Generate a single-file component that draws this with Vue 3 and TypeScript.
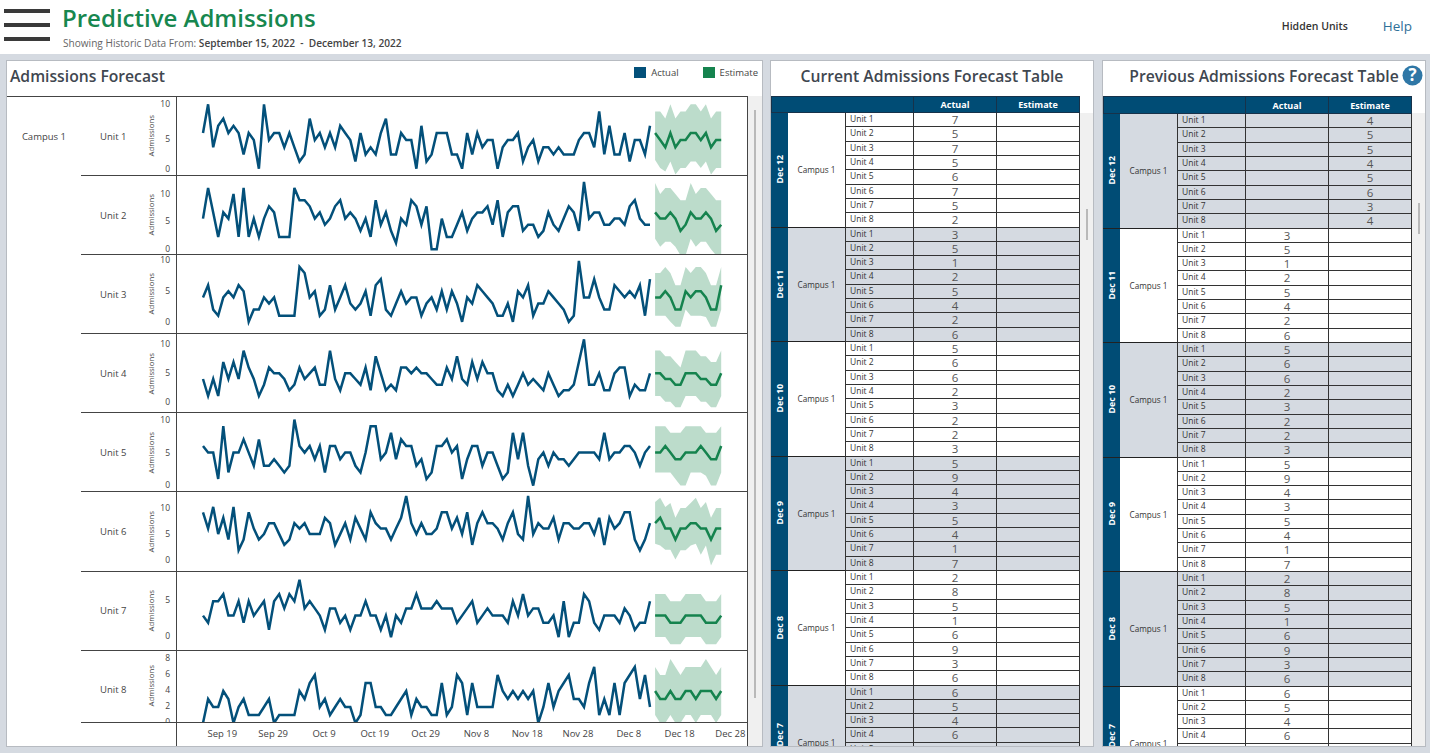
<script setup lang="ts">
interface Unit {
  name: string
  top: number
  y0: number
  step: number
  height: number
  ticks: [string, number][]
  actual: number[]
  est: number[]
  hi: number[]
  lo: number[]
}

const units: Unit[] = [
  { name: 'Unit 1', top: 96, y0: 71.7, step: 7.15, height: 79.1, ticks: [['10', 7], ['5', 42], ['0', 72]],
    actual: [5,9,3,6,7,5,6,5,2,5,4,0,9,4,5,5,3,5,3,1,2,7,4,5,3,5,3,6,5,4,1,5,2,3,2,5,7,2,2,5,4,4,0,6,1,2,5,5,5,2,2,0,5,2,5,3,4,4,0,3,4,4,5,1,3,4,1,3,3,2,3,2,2,2,4,5,5,3,8,2,6,2,2,5,1,4,4,2,6],
    est: [5,4,3,5,3,4,4,5,5,4,5,3,4,4],
    hi: [8,8,7,9,7,8,8,9,9,8,9,7,8,8],
    lo: [1.2,0.1,-0.4,1,-0.8,0.1,0.1,1,1,0.1,1,-0.8,0.1,0.1] },
  { name: 'Unit 2', top: 175, y0: 73.2, step: 6.13, height: 79.1, ticks: [['10', 18], ['5', 45], ['0', 73]],
    actual: [5,10,6,2,6,5,9,2,10,2,5,2,5,7,6,2,2,2,10,8,8,7,5,6,4,5,7,8,5,6,5,3,5,2,8,4,6,3,1,5,4,8,7,4,7,0,0,5,2,2,4,6,3,5,6,6,7,4,8,2,6,7,7,3,4,4,2,3,6,4,3,5,7,6,3,11,5,6,6,4,4,5,5,4,7,8,5,4,4],
    est: [6,5,5,6,5,3,4,6,5,5,6,5,3,4],
    hi: [10.8,9,10,10,9,8,8,10.8,9,10,10,9,8,8],
    lo: [1.7,0.4,1.2,1.2,0.4,-1,-1,1.7,0.4,1.2,1.2,0,-1,-1] },
  { name: 'Unit 3', top: 254, y0: 66.8, step: 6.1, height: 79.1, ticks: [['10', 5], ['5', 36], ['0', 67]],
    actual: [4,6,2,1,4,5,4,6,5,0,2,2,4,3,4,1,1,1,1,9,8,4,5,1,2,6,2,4,6,3,2,3,5,1,6,7,2,1,3,5,3,4,4,1,3,4,2,5,2,5,3,0,4,3,6,5,4,3,1,1,3,0,5,4,6,1,3,3,5,4,3,2,0,1,10,4,4,7,4,2,2,6,5,4,5,4,6,1,7],
    est: [4,4,5,4,2,2,5,4,5,5,4,2,2,6],
    hi: [8,8,9,8,6,6,9,8,9,9,8,6,6,9],
    lo: [1,1,1,0,-0.8,-0.8,2,1,1,1,0.8,-0.8,-0.8,2] },
  { name: 'Unit 4', top: 333, y0: 62, step: 5.67, height: 79.1, ticks: [['10', 10], ['5', 39], ['0', 68]],
    actual: [3,0,3,0,6,3,6,3,8,5,3,0,2,5,4,4,3,1,2,5,3,4,5,2,2,8,3,1,4,4,3,2,5,1,7,4,1,2,1,5,5,4,5,4,4,3,2,2,5,3,7,3,2,6,3,6,4,4,1,0,2,0,2,4,2,3,2,1,4,2,0,1,1,2,6,10,2,2,4,1,1,4,5,5,0,2,1,1,4],
    est: [4,4,3,3,2,2,4,4,4,3,3,2,2,4],
    hi: [8,8,7,7,6,5,8,8,8,7,7,6,6,8],
    lo: [0,0,-1,-1,-2,-2,0,0,0,-1,-1,-2,-2,0] },
  { name: 'Unit 5', top: 412, y0: 72.6, step: 6.6, height: 79.1, ticks: [['10', 7], ['5', 40], ['0', 72]],
    actual: [6,5,5,1,9,2,5,5,7,5,3,7,3,3,4,3,2,3,10,6,5,6,4,6,2,6,6,4,5,5,3,2,5,9,9,4,5,8,4,7,6,6,3,4,1,2,6,6,7,5,6,1,4,6,6,3,5,5,3,1,2,8,4,8,3,0,4,5,3,5,4,4,3,4,5,5,5,5,4,8,4,5,5,6,6,5,3,5,6],
    est: [5,5,6,5,4,4,5,5,5,6,5,4,4,6],
    hi: [9,9,9,8,8,8,9,9,9,9,8,8,8,9],
    lo: [2,2,2,2,1,0,0,2,2,2,1.5,0,0,2] },
  { name: 'Unit 6', top: 491, y0: 69.2, step: 5.43, height: 79.1, ticks: [['10', 16], ['5', 42], ['0', 68]],
    actual: [9,6,10,5,8,4,10,2,4,9,6,4,5,7,7,5,3,4,7,6,7,5,5,5,8,7,3,5,7,4,8,6,4,9,7,6,6,4,6,8,12,7,5,7,5,5,6,9,9,6,8,5,9,3,7,9,7,7,6,4,7,9,5,4,12,5,7,6,6,8,4,7,7,6,6,7,7,5,8,3,8,6,7,9,9,4,2,4,7],
    est: [7,8,6,6,4,6,6,7,7,6,6,4,6,6],
    hi: [10.9,11.7,10,10.7,8,9.8,9.8,10.7,11.7,9.8,10.9,8,9.8,9.8],
    lo: [3.2,2.9,2.1,2.1,0.3,2,2,2.9,3.2,1.2,2.9,-0.8,1.2,1.2] },
  { name: 'Unit 7', top: 570, y0: 65.1, step: 7.17, height: 79.1, ticks: [['5', 28], ['0', 64]],
    actual: [3,2,5,5,6,3,3,5,2,5,3,4,5,1,5,6,4,6,5,8,4,5,4,3,1,4,4,2,3,1,3,3,5,3,3,1,3,0,3,2,4,4,6,4,4,4,5,4,4,4,2,3,4,5,2,3,4,3,3,3,2,5,3,6,3,4,4,2,2,3,0,5,0,2,2,6,5,2,1,3,3,3,2,4,3,1,2,2,5],
    est: [3,3,3,2,2,2,3,3,3,3,2,2,2,3],
    hi: [6,6,6,5,5,5,6,6,6,6,5,5,5,6],
    lo: [0,0,0,-1,-1,-1,0,0,0,0,-1,-1,-1,0] },
  { name: 'Unit 8', top: 650, y0: 72, step: 8, height: 72, ticks: [['8', 7], ['6', 23], ['4', 39], ['2', 55], ['0', 71]],
    actual: [0,3,2,2,4,3,0,2,3,1,1,1,2,3,0,1,1,1,1,4,3,5,6,2,3,1,2,3,2,2,0,1,5,5,2,2,1,1,2,3,4,1,3,2,2,1,1,5,1,2,6,5,1,5,2,2,2,2,6,4,3,4,3,4,3,4,0,2,5,2,4,5,6,3,3,2,5,7,1,3,1,5,1,5,6,7,3,6,2],
    est: [4,3,3,4,3,3,4,4,3,4,4,4,3,4],
    hi: [7,6,6,8,7,6,7,7,7,7,8,7,6,7],
    lo: [1,0,0,1,0,0,1,1,0,1,1,1,0,1] }
]

const xOf = (i: number) => 26 + 5.08 * i
const yOf = (u: Unit, v: number) => u.y0 - v * u.step

function actualPoints(u: Unit): string {
  return u.actual.map((v, i) => `${xOf(i).toFixed(1)},${yOf(u, v).toFixed(1)}`).join(' ')
}
function estPoints(u: Unit): string {
  return u.est.map((v, i) => `${xOf(89 + i).toFixed(1)},${yOf(u, v).toFixed(1)}`).join(' ')
}
function bandPoints(u: Unit): string {
  const top = u.hi.map((v, i) => `${xOf(89 + i).toFixed(1)},${yOf(u, v).toFixed(1)}`)
  const bottom = u.lo.map((v, i) => `${xOf(89 + i).toFixed(1)},${yOf(u, v).toFixed(1)}`).reverse()
  return [...top, ...bottom].join(' ')
}

const dates = ['Sep 19', 'Sep 29', 'Oct 9', 'Oct 19', 'Oct 29', 'Nov 8', 'Nov 18', 'Nov 28', 'Dec 8', 'Dec 18', 'Dec 28']

const actuals: [string, number[]][] = [
  ['Dec 11', [3, 5, 1, 2, 5, 4, 2, 6]],
  ['Dec 10', [5, 6, 6, 2, 3, 2, 2, 3]],
  ['Dec 9', [5, 9, 4, 3, 5, 4, 1, 7]],
  ['Dec 8', [2, 8, 5, 1, 6, 9, 3, 6]],
  ['Dec 7', [6, 5, 4, 6, 5, 4, 5, 6]]
]

interface Group { date: string; actual: (number | null)[]; estimate: (number | null)[] }
const blank = new Array<null>(8).fill(null)

const current: Group[] = [
  { date: 'Dec 12', actual: [7, 5, 7, 5, 6, 7, 5, 2], estimate: blank },
  ...actuals.map(([date, actual]) => ({ date, actual, estimate: blank }))
]
const previous: Group[] = [
  { date: 'Dec 12', actual: blank, estimate: [4, 5, 5, 4, 5, 6, 3, 4] },
  ...actuals.map(([date, actual]) => ({ date, actual, estimate: blank }))
]

const tables = [
  { key: 'current', title: 'Current Admissions Forecast Table', groups: current, greyFirst: false, help: false, thumbTop: 96 },
  { key: 'previous', title: 'Previous Admissions Forecast Table', groups: previous, greyFirst: true, help: true, thumbTop: 90 }
]

const isGrey = (i: number, greyFirst: boolean) => (i % 2 === 0) === greyFirst
</script>

<template>
  <div class="page">
    <header class="top">
      <div class="burger" aria-label="Menu"><span></span><span></span><span></span></div>
      <div class="heading">
        <h1>Predictive Admissions</h1>
        <p>Showing Historic Data From: <b>September 15, 2022&nbsp; -&nbsp; December 13, 2022</b></p>
      </div>
      <div class="top-links">
        <span class="hidden-units">Hidden Units</span>
        <span class="help">Help</span>
      </div>
    </header>

    <main class="main">
      <section class="panel forecast">
        <div class="forecast-head">
          <h2>Admissions Forecast</h2>
          <div class="legend">
            <span class="swatch blue"></span><span class="legend-a">Actual</span>
            <span class="swatch green"></span><span>Estimate</span>
          </div>
        </div>
        <div class="forecast-body">
          <div class="chart">
            <div class="chart-rows">
              <div class="campus"><span>Campus 1</span></div>
              <div class="rows">
                <div v-for="u in units" :key="u.name" class="row" :style="{ height: u.height + 'px' }">
                  <div class="unit">
                    <span class="unit-name">{{ u.name }}</span>
                    <span class="axis-title">Admissions</span>
                    <span v-for="t in u.ticks" :key="t[0]" class="tick" :style="{ top: t[1] + 'px' }">{{ t[0] }}</span>
                  </div>
                  <svg class="plot" width="571" :height="u.height - 1">
                    <polygon :points="bandPoints(u)" fill="#bcdccb" />
                    <polyline :points="actualPoints(u)" fill="none" stroke="#03507a" stroke-width="2.5" stroke-linejoin="miter" />
                    <polyline :points="estPoints(u)" fill="none" stroke="#15834e" stroke-width="2.5" />
                  </svg>
                </div>
              </div>
            </div>
            <div class="x-axis">
              <div class="x-spacer"></div>
              <div class="x-labels"><span v-for="d in dates" :key="d">{{ d }}</span></div>
            </div>
          </div>
          <div class="track"><i class="thumb long"></i></div>
        </div>
      </section>

      <section v-for="t in tables" :key="t.key" class="panel table-panel" :class="t.key">
        <div class="table-title">
          <h2>{{ t.title }}</h2>
          <svg v-if="t.help" class="help-icon" width="21" height="21" viewBox="0 0 21 21">
            <circle cx="10.5" cy="10.5" r="10" fill="#2f77a6" />
            <text x="10.5" y="16.3" text-anchor="middle" class="q">?</text>
          </svg>
        </div>
        <div class="table-wrap">
          <div class="table">
            <div class="thead">
              <span class="th-blank"></span>
              <span class="th">Actual</span>
              <span class="th">Estimate</span>
            </div>
            <div class="tbody">
              <div v-for="(g, gi) in t.groups" :key="g.date" class="group" :class="{ grey: isGrey(gi, t.greyFirst) }">
                <div class="date"><span>{{ g.date }}</span></div>
                <div class="group-campus">Campus 1</div>
                <div class="lines">
                  <div v-for="n in 8" :key="n" class="line">
                    <span class="c-unit">Unit {{ n }}</span>
                    <span class="c-val">{{ g.actual[n - 1] }}</span>
                    <span class="c-val">{{ g.estimate[n - 1] }}</span>
                  </div>
                </div>
              </div>
            </div>
          </div>
          <div class="track side"><i class="thumb" :style="{ top: t.thumbTop + 'px' }"></i></div>
        </div>
      </section>
    </main>
  </div>
</template>

<style>
html, body { margin: 0; background: #d5dae1; }
</style>

<style scoped>
.page {
  width: 1430px;
  height: 753px;
  overflow: hidden;
  background: #d5dae1;
  font-family: "Open Sans", "Noto Sans", sans-serif;
  color: #444;
  display: flex;
  flex-direction: column;
}
.top {
  height: 54px;
  flex: none;
  background: #fff;
  display: flex;
  align-items: flex-start;
  padding-left: 4px;
  box-sizing: border-box;
}
.burger {
  width: 46px;
  margin-top: 9px;
  display: flex;
  flex-direction: column;
  gap: 10px;
}
.burger span { height: 4px; background: #3a3a3a; display: block; }
.heading { margin-left: 12px; }
h1 {
  margin: 2px 0 0;
  font-size: 24px;
  line-height: 32px;
  font-weight: 600;
  color: #17874f;
  white-space: nowrap;
}
.heading p {
  margin: 2px 0 0 1px;
  font-size: 10.1px;
  line-height: 14px;
  color: #666;
  white-space: nowrap;
}
.heading b { color: #444; font-weight: 600; }
.top-links {
  margin-left: auto;
  display: flex;
  align-items: center;
  height: 52px;
  padding-right: 18px;
}
.hidden-units { font-size: 10.5px; font-weight: 600; color: #333; margin-right: 35px; }
.help { font-size: 13.5px; color: #2f7098; }

.main {
  flex: 1;
  min-height: 0;
  display: flex;
  gap: 7px;
  padding: 6px 0 6px 6px;
}
.panel {
  background: #fff;
  border: 1px solid #b7bbc1;
  box-sizing: border-box;
  display: flex;
  flex-direction: column;
  overflow: hidden;
}
.forecast { width: 757px; }
.table-panel { width: 324px; }
.table-panel.previous { margin-left: 1px; }
h2 {
  margin: 0;
  font-size: 15.7px;
  line-height: 22px;
  font-weight: 600;
  color: #3f4750;
  white-space: nowrap;
}
.forecast-head {
  height: 35px;
  flex: none;
  display: flex;
  align-items: flex-start;
  justify-content: space-between;
  padding: 4px 4px 0 3px;
  box-sizing: border-box;
}
.legend {
  display: flex;
  align-items: center;
  font-size: 9.5px;
  color: #444;
  margin-top: 1px;
}
.swatch { width: 12px; height: 11px; margin-right: 5px; }
.swatch.blue { background: #03507a; }
.swatch.green { background: #15834e; }
.legend-a { margin-right: 24px; }

.forecast-body { flex: 1; min-height: 0; display: flex; }
.chart {
  width: 741px;
  flex: none;
  border-top: 1px solid #444;
  border-right: 1px solid #444;
  box-sizing: border-box;
  display: flex;
  flex-direction: column;
}
.chart-rows { display: flex; flex: none; }
.campus {
  width: 74px;
  flex: none;
  font-size: 9.5px;
  color: #444;
  height: 78px;
  display: flex;
  align-items: center;
  justify-content: flex-end;
  padding-right: 15px;
  box-sizing: border-box;
}
.rows { flex: 1; min-width: 0; }
.row {
  display: flex;
  box-sizing: border-box;
  border-bottom: 1px solid #444;
  overflow: hidden;
}
.row:last-child .unit-name { margin-top: 6px; }
.unit {
  width: 95px;
  flex: none;
  position: relative;
  display: flex;
  align-items: center;
  font-size: 9.5px;
  color: #444;
  padding-left: 19px;
  box-sizing: border-box;
}
.unit-name { width: 45px; }
.axis-title {
  writing-mode: vertical-rl;
  transform: rotate(180deg);
  font-size: 7.8px;
  color: #444;
  line-height: 12px;
}
.tick {
  position: absolute;
  right: 6px;
  font-size: 8.5px;
  line-height: 10px;
  margin-top: -5px;
  color: #444;
}
.plot {
  flex: none;
  display: block;
  border-left: 1px solid #444;
  box-sizing: content-box;
}
.x-axis {
  flex: 1;
  display: flex;
  min-height: 0;
}
.x-spacer { width: 169px; flex: none; border-right: 1px solid #444; }
.x-labels {
  flex: 1;
  display: flex;
  padding-left: 20px;
  font-size: 9.5px;
  color: #444;
  align-items: center;
  padding-bottom: 2px;
}
.x-labels span { width: 50.8px; flex: none; text-align: center; white-space: nowrap; }

.track {
  flex: 1;
  background: #f0f0f0;
  position: relative;
}
.thumb {
  position: absolute;
  left: 6px;
  width: 2px;
  background: #b9b9b9;
  display: block;
  height: 31px;
}
.thumb.long { top: 14px; height: 588px; }

.table-title {
  height: 35px;
  flex: none;
  position: relative;
  display: flex;
  align-items: flex-start;
  justify-content: center;
  padding-top: 4px;
  box-sizing: border-box;
}
.help-icon { position: absolute; right: 2px; top: 4px; }
.q { fill: #fff; font-size: 17px; font-weight: 700; font-family: "Open Sans", sans-serif; }
.table-wrap { flex: 1; min-height: 0; display: flex; overflow: hidden; }
.table {
  width: 309px;
  flex: none;
  display: flex;
  flex-direction: column;
  overflow: hidden;
}
.thead {
  height: 17px;
  flex: none;
  background: #004c75;
  display: grid;
  grid-template-columns: 141px 83px 83px;
  color: #fff;
  font-size: 9px;
  font-weight: 700;
  box-sizing: border-box;
  border: 1px solid #17324a;
}
.previous .thead { height: 18px; }
.th {
  display: flex;
  align-items: center;
  justify-content: center;
  border-left: 1px solid #17324a;
}
.tbody { flex: 1; }
.group {
  height: 114.5px;
  display: flex;
  background: #fff;
}
.group.grey { background: #d5dae1; }
.date {
  width: 17px;
  flex: none;
  background: #004c75;
  display: flex;
  align-items: center;
  justify-content: center;
  box-sizing: border-box;
  border-bottom: 1px solid #222;
}
.group:last-child .date { align-items: flex-start; padding-top: 37px; }
.date span {
  writing-mode: vertical-rl;
  transform: rotate(180deg);
  color: #fff;
  font-size: 8.8px;
  font-weight: 700;
  line-height: 12px;
  white-space: nowrap;
}
.group-campus {
  width: 57px;
  flex: none;
  display: flex;
  align-items: center;
  justify-content: center;
  font-size: 8.2px;
  color: #333;
  white-space: nowrap;
  box-sizing: border-box;
  border-bottom: 1px solid #222;
}
.lines {
  flex: 1;
  display: grid;
  grid-template-rows: repeat(8, 1fr);
  border-left: 1px solid #333;
  border-right: 1px solid #333;
}
.line {
  display: grid;
  grid-template-columns: 67px 83px 83px;
  border-bottom: 1px solid #333;
  min-height: 0;
}
.c-unit {
  font-size: 8.5px;
  line-height: 12px;
  padding-left: 4px;
  color: #333;
}
.c-val {
  border-left: 1px solid #333;
  font-size: 11.5px;
  line-height: 14px;
  text-align: center;
  color: #555;
}
.track.side { margin-top: 17px; }
</style>
